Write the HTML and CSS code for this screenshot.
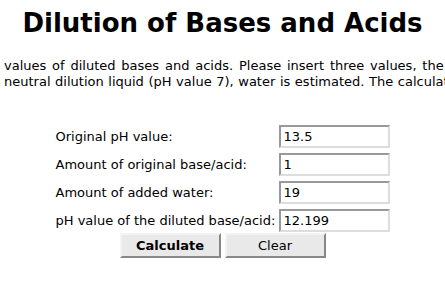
FILE: index.html
```html
<!DOCTYPE html>
<html lang="en">
<head>
    <meta charset="UTF-8">
    <meta name="viewport" content="width=device-width, initial-scale=1.0">
    <title>Dilution of Bases and Acids</title>
    <link rel="stylesheet" href="styles.css">
</head>
<body>
    <h1>Dilution of Bases and Acids</h1>

    <div class="intro">
        <p class="line wide">values of diluted bases and acids. Please insert three values, the</p>
        <p class="line narrow">neutral dilution liquid (pH value 7), water is estimated. The calculated</p>
    </div>

    <!-- Calculator form -->
    <form class="calc" onsubmit="return false">
        <div class="row">
            <label for="ph1">Original pH value:</label>
            <input type="text" id="ph1" value="13.5">
        </div>
        <div class="row">
            <label for="amount1">Amount of original base/acid:</label>
            <input type="text" id="amount1" value="1">
        </div>
        <div class="row">
            <label for="water">Amount of added water:</label>
            <input type="text" id="water" value="19">
        </div>
        <div class="row">
            <label for="ph2">pH value of the diluted base/acid:</label>
            <input type="text" id="ph2" value="12.199">
        </div>
        <div class="buttons">
            <button type="submit" class="btn btn-calc">Calculate</button>
            <button type="reset" class="btn">Clear</button>
        </div>
    </form>
</body>
</html>
```

FILE: styles.css
```css
* {
    margin: 0;
    padding: 0;
    box-sizing: border-box;
}

body {
    font-family: 'DejaVu Sans', sans-serif;
    font-size: 13px;
    color: #000;
    background: #fff;
    overflow: hidden;
}

h1 {
    font-size: 26px;
    line-height: 30px;
    font-weight: bold;
    text-align: center;
    margin-top: 8px;
}

.intro {
    margin: 20px 0 0 4px;
    line-height: 16px;
    white-space: nowrap;
}

.intro .wide {
    word-spacing: 1.7px;
}

.intro .narrow {
    word-spacing: 0.45px;
}

.calc {
    width: 334px;
    margin: 35px auto 0;
}

.row {
    display: grid;
    grid-template-columns: 223px 111px;
    align-items: center;
    margin-bottom: 5px;
}

.row input {
    height: 23px;
    padding: 0 3px;
    font-family: 'DejaVu Sans', sans-serif;
    font-size: 13px;
    border: 2px solid;
    border-color: #999 #ddd #ddd #999;
    background: #fff;
}

.buttons {
    display: flex;
    justify-content: center;
    gap: 4px;
    margin-top: -4px;
}

.btn {
    width: 101px;
    height: 25px;
    font-family: 'DejaVu Sans', sans-serif;
    font-size: 13px;
    background: #e9e9e9;
    border: 2px solid;
    border-color: #f4f4f4 #888 #888 #f4f4f4;
}

.btn-calc {
    font-weight: bold;
}
```
